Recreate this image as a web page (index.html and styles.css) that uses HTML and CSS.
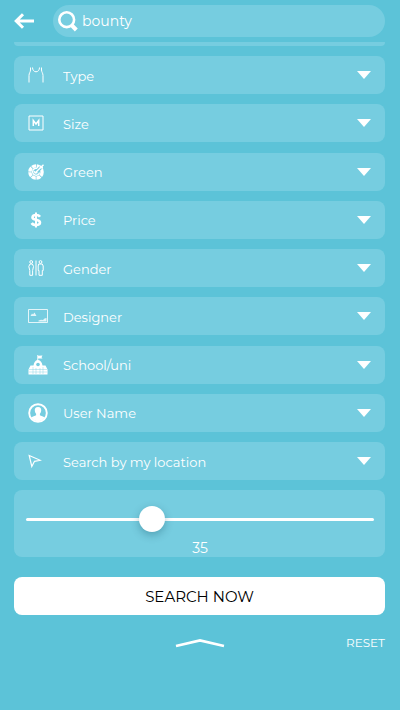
FILE: index.html
```html
<!DOCTYPE html>
<html lang="en">
<head>
<meta charset="utf-8">
<meta name="viewport" content="width=device-width, initial-scale=1">
<title>Search filters</title>
<link rel="stylesheet" href="styles.css">
</head>
<body>
<header class="topbar">
  <button class="back" type="button" aria-label="Back">
    <svg width="20" height="16" viewBox="0 0 20 16" fill="none" stroke="currentColor" stroke-width="3"><path d="M20 8H3M9 1.200L2.200 8L9 14.800"/></svg>
  </button>
  <label class="search">
    <svg width="20" height="21" viewBox="0 0 20 21" fill="none" stroke="currentColor"><circle cx="8.700" cy="8.700" r="7.400" stroke-width="2.600"/><path d="M13.500 14L18.300 19" stroke-width="4"/></svg>
    <input type="text" value="bounty" aria-label="Search">
  </label>
</header>
<main>
  <div class="scrolled-row"></div>
  <form class="filters">
    <div class="row">
      <svg class="icon" width="16" height="16" viewBox="0 0 16 16" fill="none" stroke="currentColor" stroke-width="1"><path d="M1 15.500V8.500C1 6 2.500 5 2.500 3V.5M15 15.500V8.500C15 6 13.500 5 13.500 3V.5M4.500.5C4.500 3 6 4.800 8 4.800C10 4.800 11.500 3 11.500.5"/></svg>
      <select aria-label="Type"><option>Type</option></select>
    </div>
    <div class="row">
      <svg class="icon" width="16" height="16" viewBox="0 0 16 16" fill="none" stroke="currentColor"><path d="M1 1H15V15H1Z"/><path d="M5.300 11V5.500L8 9L10.700 5.500V11" stroke-width="1.500"/></svg>
      <select aria-label="Size"><option>Size</option></select>
    </div>
    <div class="row">
      <svg class="icon" width="16" height="16" viewBox="0 0 16 16" fill="none" stroke="currentColor"><circle cx="8" cy="8" r="6.100" stroke-width="3.400" stroke-dasharray="4.100 .69"/><path d="M10.500 5.200A3.500 3.500 0 1 0 11.500 8.500" stroke-width="1.300"/><path d="M9 7.500L15.500.5" stroke="#76cde0" stroke-width="3.600"/><path d="M7 9L15.500.7M12 4L12.500 1.500M12 4L15 3.500M6 7L7.200 9L9.500 8.500" stroke-width="1.400"/></svg>
      <select aria-label="Green"><option>Green</option></select>
    </div>
    <div class="row">
      <svg class="icon" width="16" height="16" viewBox="0 0 16 16" fill="none" stroke="currentColor"><path d="M12 4.800C11 3.300 9.500 3 8 3C5.800 3 4.500 4 4.500 5.400C4.500 8.600 12 7.100 12 10.500C12 12 10.500 13 8 13C6 13 4.500 12.400 3.700 11" stroke-width="2.600"/><path d="M8 .5V15.500" stroke-width="2"/></svg>
      <select aria-label="Price"><option>Price</option></select>
    </div>
    <div class="row">
      <svg class="icon" width="16" height="16" viewBox="0 0 16 16" fill="none" stroke="currentColor" stroke-width="1"><circle cx="3.200" cy="2" r="1.400"/><path d="M2 4H4.400L5.500 6.500L4.600 10.500V15.300H1.800V10.500L.8 6.500ZM8 .5V15.500"/><circle cx="12.500" cy="2" r="1.400"/><path d="M10.700 4H14.300L15.200 6V10.500H14.300V15.300H11V10.500H10.200V6Z"/></svg>
      <select aria-label="Gender"><option>Gender</option></select>
    </div>
    <div class="row">
      <svg class="icon" width="20" height="14" viewBox="0 0 20 14"><path d="M.5.5H19.500V13.500H.5Z" fill="none" stroke="currentColor" stroke-width=".8"/><path d="M2.500 7L4 4.500L5 5.500L6.500 3.500L8.500 7ZM10.500 12.500V11.500L13 10.800L15 11L16.500 9.500L18.500 9V12.500Z" fill="currentColor" opacity=".8"/></svg>
      <select aria-label="Designer"><option>Designer</option></select>
    </div>
    <div class="row">
      <svg class="icon" width="20" height="20" viewBox="0 0 20 20" fill="currentColor"><path d="M9.300 0H10.200V.8L14.500.6L13.500 2.200L14.500 3.600H10.200V5C12.500 5.500 14 7 14.500 10.500H17.500L19.500 14.500V19.500H.5V14.500L2.500 10.500H5.500C6 7 7.500 5.500 9.300 5Z"/><circle cx="10" cy="9.500" r="1.800" fill="#76cde0"/><path d="M1 14.500H19M1 17H19M5 12V19M8 13V19M12 13V19M15 12V19" stroke="#76cde0" stroke-width=".4"/></svg>
      <select aria-label="School/uni"><option>School/uni</option></select>
    </div>
    <div class="row">
      <svg class="icon" width="20" height="20" viewBox="0 0 20 20"><circle cx="10" cy="10" r="8.800" fill="none" stroke="currentColor" stroke-width="1.900"/><path d="M10 4C7.500 4 6.600 5.600 6.800 7.500C6.900 9.200 7.500 10 8.100 10.700V12.300C6.800 13.200 4.700 13.300 3.400 14.500C6.500 19.500 13.500 19.500 16.600 14.500C15.300 13.300 13.200 13.200 11.900 12.300V10.700C12.500 10 13.100 9.200 13.200 7.500C13.400 5.600 12.500 4 10 4Z" fill="currentColor"/></svg>
      <select aria-label="User Name"><option>User Name</option></select>
    </div>
    <div class="row">
      <svg class="icon" width="14" height="14" viewBox="0 0 14 14" fill="none" stroke="currentColor" stroke-width="1.200"><path d="M1.200 1.500L12.300 6.300L6.500 7.300L3.800 12.500Z"/></svg>
      <select aria-label="Search by my location"><option>Search by my location</option></select>
    </div>
  </form>
  <div class="distance">
    <input id="distance" type="range" min="0" max="100" value="35" aria-label="Distance">
    <output for="distance">35</output>
  </div>
  <button class="submit" type="button">SEARCH NOW</button>
  <div class="footer">
    <button class="collapse" type="button" aria-label="Collapse">
      <svg width="50" height="10" viewBox="0 0 50 10" fill="none" stroke="currentColor" stroke-width="2.800"><path d="M1 8L25 2.500L49 8"/></svg>
    </button>
    <button class="reset" type="button">RESET</button>
  </div>
</main>
</body>
</html>
```
FILE: styles.css
```css
* { box-sizing: border-box; }

body {
  margin: 0;
  min-height: 100vh;
  background: #5cc3d8;
  color: #fff;
  font-family: Montserrat, Inter, "Liberation Sans", sans-serif;
  font-size: 13px;
}

button, input, select {
  margin: 0;
  padding: 0;
  border: 0;
  background: none;
  color: inherit;
  font: inherit;
}

svg { display: block; flex: none; }

.topbar {
  display: flex;
  align-items: center;
  gap: 19px;
  height: 42px;
  padding: 0 15px 0 14px;
}

.search {
  display: flex;
  flex: 1;
  align-items: center;
  gap: 4px;
  height: 32px;
  padding: 0 5px;
  border-radius: 16px;
  background: #76cde0;
}

.search input {
  flex: 1;
  min-width: 0;
  outline: none;
}

main { padding: 0 15px 0 14px; }

.scrolled-row {
  height: 4px;
  margin-bottom: 10px;
  border-radius: 0 0 8px 8px;
  background: #76cde0;
}

.filters {
  display: flex;
  flex-direction: column;
  justify-content: space-between;
  min-height: 424px;
}

.row {
  display: grid;
  grid-template-columns: 35px 1fr;
  align-items: center;
  height: 38px;
  padding-left: 14px;
  border-radius: 8px;
  background: #76cde0;
}

.row select {
  width: 100%;
  height: 38px;
  padding-top: 1px;
  appearance: none;
  background: url("data:image/svg+xml,%3Csvg xmlns='http://www.w3.org/2000/svg' width='14' height='8'%3E%3Cpath d='M0 0H14L7 8Z' fill='white'/%3E%3C/svg%3E") no-repeat right 14px center;
}

.distance {
  display: flex;
  flex-direction: column;
  align-items: center;
  margin: 10px 0 20px;
  padding: 16px 11px 0 12px;
  height: 67px;
  border-radius: 8px;
  background: #76cde0;
}

.distance input {
  width: 100%;
  height: 26px;
  appearance: none;
}

.distance input::-webkit-slider-runnable-track {
  height: 3px;
  border-radius: 2px;
  background: #fff;
}

.distance input::-webkit-slider-thumb {
  width: 26px;
  height: 26px;
  margin-top: -12px;
  appearance: none;
  border-radius: 50%;
  background: #fff;
  box-shadow: 0 3px 8px rgba(0, 60, 80, 0.3);
}

.distance output {
  margin-top: 8px;
  line-height: 16px;
}

.search input,
.distance output { font-size: 14px; }

.submit {
  display: block;
  width: 100%;
  height: 38px;
  border-radius: 8px;
  background: #fff;
  color: #000;
  font-size: 15px;
}

.footer {
  display: grid;
  grid-template-columns: 1fr auto 1fr;
  align-items: center;
  margin-top: 20px;
}

.collapse { grid-column: 2; }

.reset {
  justify-self: end;
  font-size: 12px;
  line-height: 16px;
}
```
